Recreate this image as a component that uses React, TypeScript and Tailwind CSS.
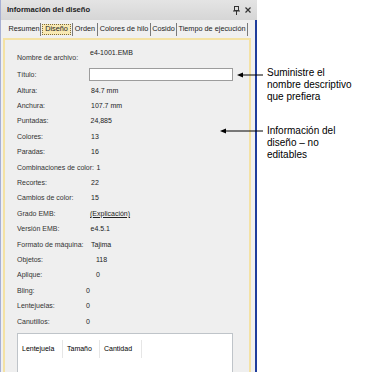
import React from 'react';

// Row data: label, value, and the x where the value starts (px, page coords)
const ROWS: { label: string; value: string; x: number; link?: boolean }[] = [
  { label: "Altura:", value: "84.7 mm", x: 91 },
  { label: "Anchura:", value: "107.7 mm", x: 91 },
  { label: "Puntadas:", value: "24,885", x: 90.5 },
  { label: "Colores:", value: "13", x: 91 },
  { label: "Paradas:", value: "16", x: 91 },
  { label: "Combinaciones de color:", value: "1", x: 96.5 },
  { label: "Recortes:", value: "22", x: 91 },
  { label: "Cambios de color:", value: "15", x: 91 },
  { label: "Grado EMB:", value: "(Explicación)", x: 90, link: true },
  { label: "Versión EMB:", value: "e4.5.1", x: 90.5 },
  { label: "Formato de máquina:", value: "Tajima", x: 91 },
  { label: "Objetos:", value: "118", x: 96 },
  { label: "Aplique:", value: "0", x: 96 },
  { label: "Bling:", value: "0", x: 86 },
  { label: "Lentejuelas:", value: "0", x: 86 },
  { label: "Canutillos:", value: "0", x: 86 },
];

const TABS = [
  { label: "Resumen", w: 33 },
  { label: "Diseño", w: 32, active: true },
  { label: "Orden", w: 25 },
  { label: "Colores de hilo", w: 53 },
  { label: "Cosido", w: 26 },
  { label: "Tiempo de ejecución", w: 71 },
];

const LABEL_LEFT = 17;

function PinIcon() {
  return (
    <svg width="7" height="9" viewBox="0 0 7 9" className="block">
      <rect x="1.5" y="0.5" width="4" height="4" fill="none" stroke="#333" strokeWidth="1" />
      <line x1="0" y1="5" x2="7" y2="5" stroke="#333" strokeWidth="1" />
      <line x1="3.5" y1="5" x2="3.5" y2="9" stroke="#333" strokeWidth="1" />
    </svg>
  );
}

function CloseIcon() {
  return (
    <svg width="6" height="6" viewBox="0 0 6 6" className="block">
      <path d="M0.5 0.5 L5.5 5.5 M5.5 0.5 L0.5 5.5" stroke="#333" strokeWidth="1.2" />
    </svg>
  );
}

export default function App() {
  return (
    <div
      className="relative w-[371px] h-[372px] overflow-hidden bg-white flex"
      style={{ fontFamily: '"Liberation Sans", Arial, sans-serif' }}
    >
      {/* Docked panel */}
      <div className="w-[257px] h-full flex flex-col bg-[#f0f0f0] border-l border-[#a7b0d4]">
        <div className="h-[20px] shrink-0 flex items-center justify-between pl-[6px] pr-[6px] bg-gradient-to-b from-[#e4e4e4] to-[#d6d6d6]">
          <span className="text-[7.6px] font-bold text-[#222]">Información del diseño</span>
          <div className="flex items-center gap-[5px]">
            <PinIcon />
            <CloseIcon />
          </div>
        </div>

        <div className="flex-1 flex flex-col border-r-2 border-[#1f3d9c] pr-[4px]">
          {/* Tabs */}
          <div className="h-[18px] shrink-0 flex items-start pt-[3px] pl-[7px]">
            {TABS.map((t) => (
              <div
                key={t.label}
                style={{ width: t.w }}
                className="h-[13px] flex items-center justify-center border-r border-[#7a7a7a] text-[7.3px] text-[#222]"
              >
                {t.active ? (
                  <span className="h-[11px] px-[2px] flex items-center border border-dotted border-[#7d6b3a] bg-[#f9e9b2]">
                    {t.label}
                  </span>
                ) : (
                  <span>{t.label}</span>
                )}
              </div>
            ))}
          </div>

          {/* Content */}
          <div className="flex-1 ml-[2px] border-2 border-b-0 border-[#f4e2a4] bg-[#efefef] text-[7px] leading-[10px]">
            <div className="h-[26px] flex items-start" style={{ paddingLeft: LABEL_LEFT - 5 }}>
              <span className="w-[73px] pt-[13px] text-[#333]">Nombre de archivo:</span>
              <span className="pt-[8px] text-[#222]">e4-1001.EMB</span>
            </div>
            <div className="h-[17px] flex items-center" style={{ paddingLeft: LABEL_LEFT - 5 }}>
              <span className="w-[72px] text-[#333]">Título:</span>
              <div className="w-[144px] h-[13px] bg-white border border-[#9c9c9c]" />
            </div>
            {ROWS.map((r) => (
              <div key={r.label} className="h-[15.4px] flex items-center relative" style={{ paddingLeft: LABEL_LEFT - 5 }}>
                <span className="text-[#333] whitespace-nowrap">{r.label}</span>
                <span
                  className={`absolute text-[#222] ${r.link ? "underline" : ""}`}
                  style={{ left: r.x - 5 }}
                >
                  {r.value}
                </span>
              </div>
            ))}

            {/* Sequin table */}
            <div className="mt-[3.6px] ml-[12px] w-[216px] h-[60px] bg-white border border-[#bfc4c9] pt-[6px]">
              <div className="h-[18px] flex">
                <div className="w-[45px] pl-[4px] flex items-center border-r border-[#e6e6e6]">Lentejuela</div>
                <div className="w-[37px] pl-[4px] flex items-center border-r border-[#e6e6e6]">Tamaño</div>
                <div className="w-[42px] pl-[4px] flex items-center border-r border-[#e6e6e6]">Cantidad</div>
              </div>
            </div>
          </div>
        </div>
      </div>

      {/* Callouts */}
      <div className="flex-1 flex flex-col pl-[10px] pt-[67px] text-[10px] leading-[12px] text-black">
        <div>
          <div>Suministre el</div>
          <div>nombre descriptivo</div>
          <div>que prefiera</div>
        </div>
        <div className="mt-[22px]">
          <div>Información del</div>
          <div>diseño – no</div>
          <div>editables</div>
        </div>
      </div>

      {/* Leader arrows over the panel edge */}
      <svg className="absolute inset-0 pointer-events-none" width="371" height="372">
        <line x1="240" y1="75" x2="263" y2="75" stroke="#000" strokeWidth="1" />
        <path d="M237 75 L243 72.5 L243 77.5 Z" fill="#000" />
        <line x1="223" y1="131" x2="263" y2="131" stroke="#000" strokeWidth="1" />
        <path d="M220 131 L226 128.5 L226 133.5 Z" fill="#000" />
      </svg>
    </div>
  );
}
